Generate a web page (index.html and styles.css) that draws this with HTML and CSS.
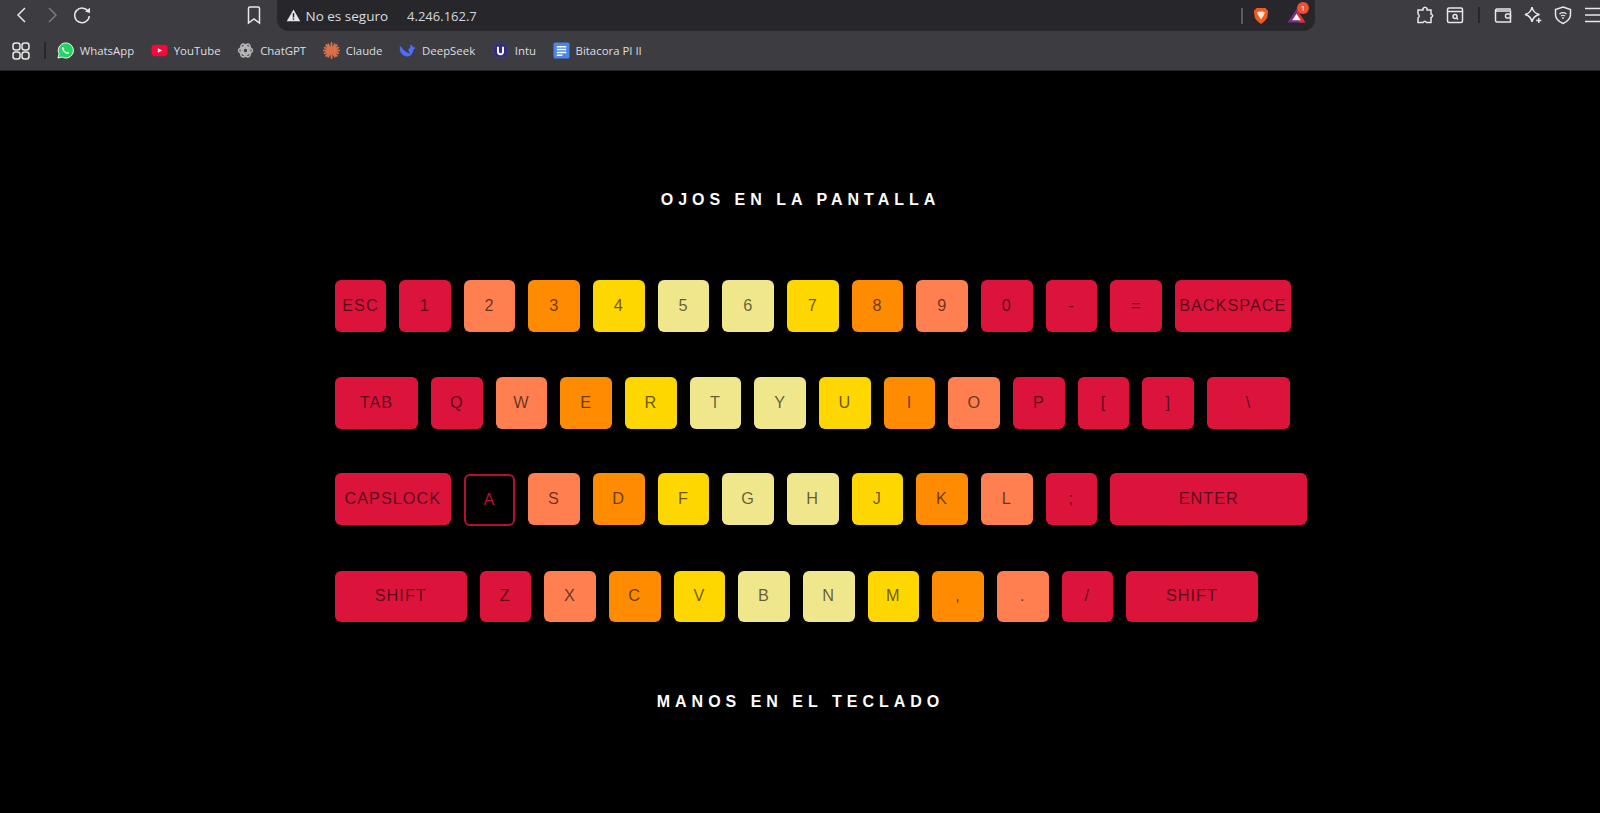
FILE: index.html
```html
<!DOCTYPE html>
<html lang="en">
<head>
    <meta charset="UTF-8">
    <meta name="viewport" content="width=device-width, initial-scale=1.0">
    <title>Ojos en la pantalla</title>
    <link rel="stylesheet" href="styles.css">
</head>
<body>

    <header class="browser">
        <div class="toolbar">
            <div class="nav">
                <svg class="icon" viewBox="0 0 20 20"><path d="M13 3 L6 10 L13 17"/></svg>
                <svg class="icon dim" viewBox="0 0 20 20"><path d="M7 3 L14 10 L7 17"/></svg>
                <svg class="icon" viewBox="0 0 20 20"><path d="M16.5 7 A7.3 7.3 0 1 0 17.3 11"/><path class="fill" d="M13 6.5 L18 2.8 L18 8 Z"/></svg>
            </div>
            <svg class="icon bookmark" viewBox="0 0 20 20"><path d="M4.5 3.5 Q4.5 2 6 2 H14 Q15.5 2 15.5 3.5 V18 L10 14 L4.5 18 Z"/></svg>
            <div class="address">
                <svg class="warn" viewBox="0 0 16 16"><path d="M8 1.5 L15.2 14 H0.8 Z" fill="#e8e8ea"/><rect x="7.2" y="5.5" width="1.6" height="4.6" fill="#26262b"/><rect x="7.2" y="11" width="1.6" height="1.6" fill="#26262b"/></svg>
                <span class="secure">No es seguro</span>
                <span class="url">4.246.162.7</span>
                <span class="spacer"></span>
                <span class="divider"></span>
                <svg class="brave" viewBox="0 0 18 20"><path d="M4 1 H14 L17 4.5 L16 12 Q14 16 9 19 Q4 16 2 12 L1 4.5 Z" fill="#f0591f"/><path d="M4.5 6 L7 5 H11 L13.5 6 L12 9.5 L9 14 L6 9.5 Z" fill="#fbe3d6"/></svg>
                <span class="rewards">
                    <svg viewBox="0 0 20 16"><path d="M10 1 L19.5 15.5 H0.5 Z" fill="#7b2a8e"/><path d="M10 1 L19.5 15.5 H13 Z" fill="#e0312e"/><path d="M10 6 L14.5 13 H5.5 Z" fill="#fff"/></svg>
                    <span class="badge">1</span>
                </span>
            </div>
            <div class="actions">
                <svg class="icon" viewBox="0 0 20 20"><path d="M8 3.5 Q10 0.8 12 3.5 V5 H16 V9 Q19 10.5 16.5 12.5 H16 V17.5 H11.5 Q10 14.8 8 17.5 H3 V13 Q5.5 11 3 9 V5 H8 Z"/></svg>
                <svg class="icon" viewBox="0 0 20 20"><rect x="2.5" y="3" width="15" height="14.5" rx="1.5"/><path d="M2.5 6.5 H17.5"/><circle cx="10" cy="11.5" r="2"/><path d="M11.5 13 L13 14.5"/></svg>
                <span class="sep"></span>
                <svg class="icon" viewBox="0 0 20 20"><path d="M17 5 V4 H4 Q2.5 4 2.5 6 V15 Q2.5 17 4 17 H17.5 V6 H3"/><rect x="12.5" y="9" width="5" height="4" rx="1.5"/></svg>
                <svg class="icon" viewBox="0 0 20 20"><path d="M9 2 Q10 8 16.5 9.5 Q10 11 9 17 Q8 11 2 9.5 Q8 8 9 2 Z"/><path class="fill" d="M15 13 H16.5 V14.8 H18.3 V16.2 H16.5 V18 H15 V16.2 H13.2 V14.8 H15 Z"/></svg>
                <svg class="icon" viewBox="0 0 20 20"><path d="M10 2 L17.5 4.5 V10 Q17 15.5 10 18.5 Q3 15.5 2.5 10 V4.5 Z"/><path class="thin" d="M6.5 9 Q10 6.3 13.5 9 M8 11 Q10 9.5 12 11"/><circle class="fill" cx="10" cy="13" r="0.9"/></svg>
                <svg class="icon" viewBox="0 0 20 20"><path d="M2 3.5 H20 M2 10 H20 M2 16.5 H20"/></svg>
            </div>
        </div>
        <nav class="bookmarks">
            <svg class="icon apps" viewBox="0 0 20 20"><rect x="2" y="2" width="7" height="7" rx="2.5"/><rect x="11" y="2" width="7" height="7" rx="2.5"/><rect x="2" y="11" width="7" height="7" rx="2.5"/><rect x="11" y="11" width="7" height="7" rx="2.5"/></svg>
            <span class="sep"></span>
            <a class="bm"><svg viewBox="0 0 18 18"><path d="M1 17 L2.2 12.6 A8 8 0 1 1 5.3 15.9 Z" fill="#25d366" stroke="#fff" stroke-width="1"/><path d="M6 5 Q5 6 5.5 8 Q7 11.5 10.5 12.7 Q12.5 13 13 11.5 L11 10.3 L10 11 Q8 10 7.2 8 L7.8 7 Z" fill="#fff"/></svg>WhatsApp</a>
            <a class="bm"><svg viewBox="0 0 18 18"><rect x="0.5" y="3" width="17" height="12" rx="3.5" fill="#f5083a"/><path d="M7.3 6.5 L11.8 9 L7.3 11.5 Z" fill="#fff"/></svg>YouTube</a>
            <a class="bm"><svg viewBox="0 0 18 18" fill="none" stroke="#b5b5b8" stroke-width="1.7"><circle cx="9" cy="9" r="2.6"/><ellipse cx="9" cy="9" rx="7.4" ry="3.8"/><ellipse cx="9" cy="9" rx="7.4" ry="3.8" transform="rotate(60 9 9)"/><ellipse cx="9" cy="9" rx="7.4" ry="3.8" transform="rotate(120 9 9)"/></svg>ChatGPT</a>
            <a class="bm"><svg viewBox="0 0 18 18" stroke="#d9704a" stroke-width="2" stroke-linecap="round"><path d="M9 1 V17 M1 9 H17 M3.3 3.3 L14.7 14.7 M14.7 3.3 L3.3 14.7 M5.5 2.5 L12.5 15.5 M12.5 2.5 L5.5 15.5 M1.8 6 L16.2 12 M16.2 6 L1.8 12"/></svg>Claude</a>
            <a class="bm"><svg viewBox="0 0 18 18"><path d="M0.8 4 Q0 13 7 15.2 Q12.5 16.5 14.7 10.5 Q15.2 8 17.6 5.8 L15.2 5.6 Q14 3 11.2 3 Q13 5 11.5 6.2 Q9.5 7 10 9.5 L11.8 12.2 Q6 10.5 3 6 Z" fill="#4d6bfe"/></svg>DeepSeek</a>
            <a class="bm"><svg viewBox="0 0 18 18"><circle cx="9" cy="9" r="8.5" fill="#332d78"/><circle cx="9" cy="9" r="7.8" fill="none" stroke="#5049ad" stroke-dasharray="1.5 1.5"/><path d="M6.3 5 V10 Q6.3 13 9 13 Q11.7 13 11.7 10 V5" fill="none" stroke="#fff" stroke-width="2"/></svg>Intu</a>
            <a class="bm"><svg viewBox="0 0 18 18"><rect x="0.5" y="0.5" width="17" height="17" rx="2" fill="#4a86e8"/><path d="M4 5 H14 M4 8 H14 M4 11 H14 M4 14 H10" stroke="#fff" stroke-width="1.6"/></svg>Bitacora PI II</a>
        </nav>
    </header>

    <main class="page">
        <h2 class="hint">OJOS EN LA PANTALLA</h2>

        <div class="keyboard">
            <div class="row">
                <div class="key red k-esc">ESC</div>
                <div class="key red">1</div>
                <div class="key coral">2</div>
                <div class="key orange">3</div>
                <div class="key gold">4</div>
                <div class="key khaki">5</div>
                <div class="key khaki">6</div>
                <div class="key gold">7</div>
                <div class="key orange">8</div>
                <div class="key coral">9</div>
                <div class="key red">0</div>
                <div class="key red">-</div>
                <div class="key red">=</div>
                <div class="key red k-backspace">BACKSPACE</div>
            </div>
            <div class="row">
                <div class="key red k-tab">TAB</div>
                <div class="key red">Q</div>
                <div class="key coral">W</div>
                <div class="key orange">E</div>
                <div class="key gold">R</div>
                <div class="key khaki">T</div>
                <div class="key khaki">Y</div>
                <div class="key gold">U</div>
                <div class="key orange">I</div>
                <div class="key coral">O</div>
                <div class="key red">P</div>
                <div class="key red">[</div>
                <div class="key red">]</div>
                <div class="key red k-tab">\</div>
            </div>
            <div class="row">
                <div class="key red k-backspace">CAPSLOCK</div>
                <div class="key active">A</div>
                <div class="key coral">S</div>
                <div class="key orange">D</div>
                <div class="key gold">F</div>
                <div class="key khaki">G</div>
                <div class="key khaki">H</div>
                <div class="key gold">J</div>
                <div class="key orange">K</div>
                <div class="key coral">L</div>
                <div class="key red">;</div>
                <div class="key red k-enter">ENTER</div>
            </div>
            <div class="row row-last">
                <div class="key red k-shift">SHIFT</div>
                <div class="key red">Z</div>
                <div class="key coral">X</div>
                <div class="key orange">C</div>
                <div class="key gold">V</div>
                <div class="key khaki">B</div>
                <div class="key khaki">N</div>
                <div class="key gold">M</div>
                <div class="key orange">,</div>
                <div class="key coral">.</div>
                <div class="key red">/</div>
                <div class="key red k-shift">SHIFT</div>
            </div>
        </div>

        <h2 class="hint hint-bottom">MANOS EN EL TECLADO</h2>
    </main>

</body>
</html>
```

FILE: styles.css
```css
* {
    box-sizing: border-box;
}
html, body {
    height: 100%;
}
body {
    margin: 0;
    background-color: #000;
    font-family: "Liberation Sans", Arial, sans-serif;
    overflow: hidden;
}

/* browser chrome */
.browser {
    background-color: #3c3c41;
    height: 71px;
    border-bottom: 1px solid #222226;
    font-family: "Open Sans", "Noto Sans", sans-serif;
    color: #e8e8ea;
    overflow: hidden;
}
.toolbar {
    display: flex;
    align-items: flex-start;
    height: 31px;
}
.icon {
    width: 20px;
    height: 20px;
    flex: none;
    fill: none;
    stroke: #e8e8ea;
    stroke-width: 1.5;
}
.icon .fill {
    fill: #e8e8ea;
    stroke: none;
}
.icon .thin {
    stroke-width: 1.2;
}
.icon.dim {
    stroke: #7a7a7e;
}
.nav {
    display: flex;
    gap: 10px;
    padding: 5px 0 0 12px;
    width: 244px;
    flex: none;
}
.bookmark {
    margin-top: 5px;
}
.address {
    display: flex;
    align-items: center;
    flex: none;
    width: 1038.5px;
    height: 31px;
    margin-left: 12.5px;
    padding: 0 6px 0 9px;
    background-color: #26262b;
    border-radius: 0 0 12px 12px;
    font-size: 13.5px;
}
.warn {
    width: 15px;
    height: 15px;
    margin-right: 5px;
}
.secure {
    color: #dcdcde;
}
.url {
    margin-left: 19px;
    color: #d6d6d8;
    font-size: 13px;
}
.spacer {
    flex: 1;
}
.divider {
    width: 2px;
    height: 16px;
    background-color: #5a5a5e;
    margin-right: 10px;
}
.brave {
    width: 16px;
    height: 18px;
}
.rewards {
    position: relative;
    display: flex;
    margin-left: 17px;
    width: 23px;
}
.rewards svg {
    width: 21px;
    height: 15px;
}
.badge {
    position: absolute;
    left: 11px;
    top: -6px;
    width: 12px;
    height: 12px;
    border-radius: 50%;
    background-color: #f0502e;
    color: #fff;
    font-size: 8px;
    line-height: 12px;
    text-align: center;
}
.actions {
    display: flex;
    align-items: center;
    flex: none;
    gap: 10px;
    margin-left: 100px;
    padding-top: 5px;
}
.sep {
    width: 2px;
    height: 16px;
    margin: 0 3px;
    background-color: #26262b;
    flex: none;
}
.bookmarks {
    display: flex;
    align-items: center;
    gap: 16.6px;
    height: 39px;
    padding-left: 11px;
    font-size: 11.4px;
}
.apps {
    margin-right: -4px;
}
.bookmarks .sep {
    height: 17px;
    margin: 0 -5.5px 0 0;
}
.bm {
    display: flex;
    align-items: center;
    gap: 6px;
    color: #dedee0;
}
.bm svg {
    width: 17px;
    height: 17px;
}

/* typing page */
.page {
    padding-top: 120px;
}
.hint {
    margin: 0;
    padding-left: 1px;
    color: #fff;
    font-size: 16px;
    font-weight: bold;
    letter-spacing: 5px;
    text-align: center;
    line-height: 18px;
}
.hint-bottom {
    margin-top: 71px;
}
.keyboard {
    display: flex;
    flex-direction: column;
    gap: 44.6px;
    margin-top: 71px;
    padding-left: 335px;
}
.row {
    display: flex;
    gap: 13px;
}
.row-last {
    margin-top: 1px;
}
.row-last .key {
    height: 51px;
}
.key {
    display: flex;
    align-items: center;
    justify-content: center;
    flex: none;
    width: 51.68px;
    height: 52px;
    padding-bottom: 1px;
    border-radius: 6px;
    font-size: 16.3px;
    letter-spacing: 1px;
    color: rgba(0, 0, 0, 0.6);
}
.red { background-color: #dc143c; }
.coral { background-color: #ff7f50; }
.orange { background-color: #ff8c00; }
.gold { background-color: #ffd700; }
.khaki { background-color: #f0e68c; }
.active {
    border: 2px solid #b3122f;
    color: #b3122f;
    transform: translateY(1px);
}
.k-esc { width: 51px; }
.k-tab { width: 83px; }
.k-backspace { width: 115.5px; }
.k-enter { width: 197px; }
.k-shift { width: 131.5px; }
```
